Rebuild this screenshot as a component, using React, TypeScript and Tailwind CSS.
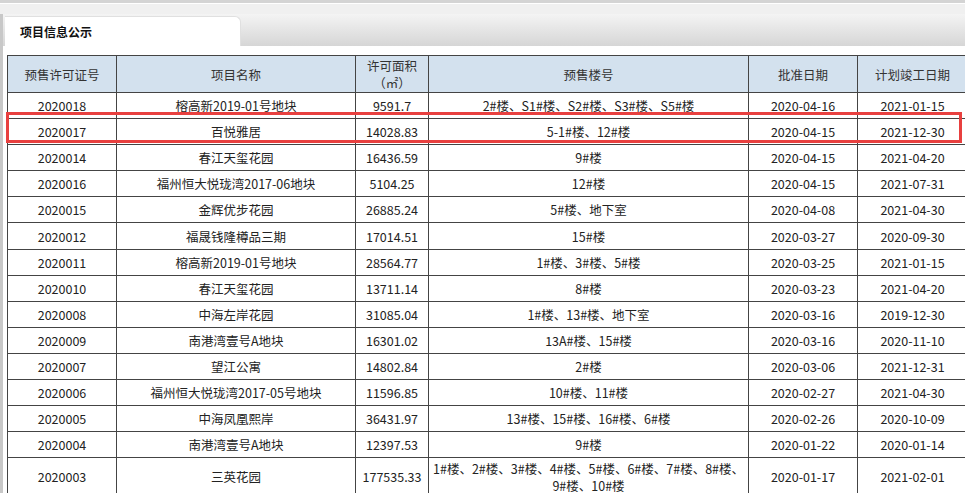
import React from "react";

const rows: [string, string, string, string, string, string][] = [
  ["2020018", "榕高新2019-01号地块", "9591.7", "2#楼、S1#楼、S2#楼、S3#楼、S5#楼", "2020-04-16", "2021-01-15"],
  ["2020017", "百悦雅居", "14028.83", "5-1#楼、12#楼", "2020-04-15", "2021-12-30"],
  ["2020014", "春江天玺花园", "16436.59", "9#楼", "2020-04-15", "2021-04-20"],
  ["2020016", "福州恒大悦珑湾2017-06地块", "5104.25", "12#楼", "2020-04-15", "2021-07-31"],
  ["2020015", "金辉优步花园", "26885.24", "5#楼、地下室", "2020-04-08", "2021-04-30"],
  ["2020012", "福晟钱隆樽品三期", "17014.51", "15#楼", "2020-03-27", "2020-09-30"],
  ["2020011", "榕高新2019-01号地块", "28564.77", "1#楼、3#楼、5#楼", "2020-03-25", "2021-01-15"],
  ["2020010", "春江天玺花园", "13711.14", "8#楼", "2020-03-23", "2021-04-20"],
  ["2020008", "中海左岸花园", "31085.04", "1#楼、13#楼、地下室", "2020-03-16", "2019-12-30"],
  ["2020009", "南港湾壹号A地块", "16301.02", "13A#楼、15#楼", "2020-03-16", "2020-11-10"],
  ["2020007", "望江公寓", "14802.84", "2#楼", "2020-03-06", "2021-12-31"],
  ["2020006", "福州恒大悦珑湾2017-05号地块", "11596.85", "10#楼、11#楼", "2020-02-27", "2021-04-30"],
  ["2020005", "中海凤凰熙岸", "36431.97", "13#楼、15#楼、16#楼、6#楼", "2020-02-26", "2020-10-09"],
  ["2020004", "南港湾壹号A地块", "12397.53", "9#楼", "2020-01-22", "2020-01-14"],
  ["2020003", "三英花园", "177535.33", "1#楼、2#楼、3#楼、4#楼、5#楼、6#楼、7#楼、8#楼、9#楼、10#楼", "2020-01-17", "2021-02-01"],
];

const widths = ["w-[109px]", "w-[239px]", "w-[73px]", "w-[320px]", "w-[109px]", "w-[110px]"];

export default function App() {
  return (
    <div className="w-[965px] h-[493px] overflow-hidden bg-white relative" style={{ fontFamily: '"Noto Sans CJK SC", "Liberation Sans", sans-serif' }}>
      <div className="h-[3px] bg-[#d4d4d4]" />
      <div className="h-[11px] bg-[#f0f0f0] border-t border-[#fff]" />
      <div className="flex border-l-[3px] border-[#c8c8c8]">
        <div className="flex-1">
          <div className="h-[32px] bg-gradient-to-b from-[#f4f4f4] to-[#d6d6d6] flex items-end pl-[2px]">
            <div className="w-[236px] h-[30px] bg-white rounded-tr-[6px] border-t border-r border-[#e0e0e0] flex items-center pl-[15px] text-[12px] font-bold text-[#111]">
              项目信息公示
            </div>
          </div>
          <div className="h-[9px] bg-white" />
          <table className="ml-[4px] border-collapse text-[12.5px] text-[#222] table-fixed w-[960px]">
            <colgroup>
              {widths.map((w, i) => <col key={i} className={w} />)}
            </colgroup>
            <thead>
              <tr className="bg-[#d3e1ee] h-[37px]">
                {["预售许可证号", "项目名称", "许可面积\n（㎡）", "预售楼号", "批准日期", "计划竣工日期"].map((h, i) => (
                  <th key={i} className="border border-[#444] font-normal text-center whitespace-pre-line leading-[17px] text-[#333]">{h}</th>
                ))}
              </tr>
            </thead>
            <tbody>
              {rows.map((r, ri) => (
                <tr key={ri} className={ri === 14 ? "h-[38px]" : "h-[26.1px]"}>
                  {r.map((c, ci) => (
                    <td key={ci} className={`border border-[#444] text-center leading-[17px] ${ci === 3 && ri === 14 ? "px-1" : ""}`}>{c}</td>
                  ))}
                </tr>
              ))}
            </tbody>
          </table>
        </div>
      </div>
      <div className="absolute left-[6px] top-[112px] w-[956px] h-[31px] border-[3px] border-[#e8403f]" />
    </div>
  );
}
